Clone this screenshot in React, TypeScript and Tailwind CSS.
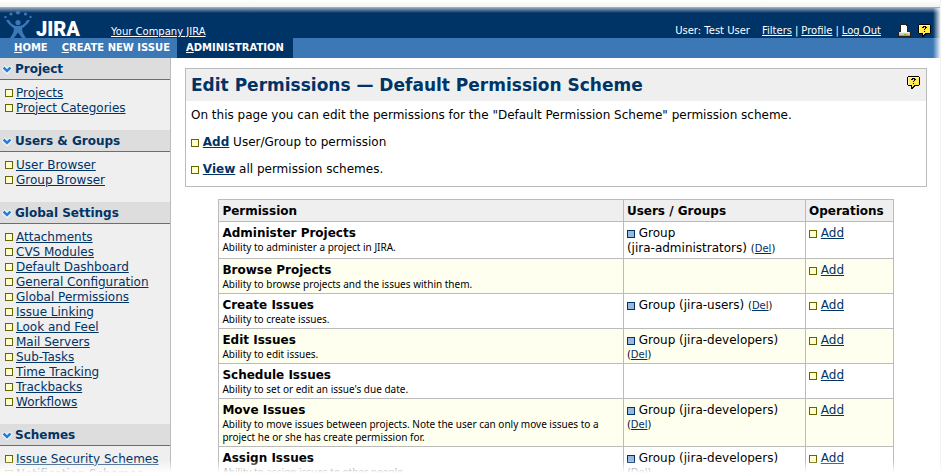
import React from "react";

type Section = { title: string; links: string[] };

const sections: Section[] = [
  { title: "Project", links: ["Projects", "Project Categories"] },
  { title: "Users & Groups", links: ["User Browser", "Group Browser"] },
  {
    title: "Global Settings",
    links: [
      "Attachments",
      "CVS Modules",
      "Default Dashboard",
      "General Configuration",
      "Global Permissions",
      "Issue Linking",
      "Look and Feel",
      "Mail Servers",
      "Sub-Tasks",
      "Time Tracking",
      "Trackbacks",
      "Workflows",
    ],
  },
  { title: "Schemes", links: ["Issue Security Schemes", "Notification Schemes"] },
];

type Permission = { name: string; about: string; group?: string };

const permissions: Permission[] = [
  { name: "Administer Projects", about: "Ability to administer a project in JIRA.", group: "jira-administrators" },
  { name: "Browse Projects", about: "Ability to browse projects and the issues within them." },
  { name: "Create Issues", about: "Ability to create issues.", group: "jira-users" },
  { name: "Edit Issues", about: "Ability to edit issues.", group: "jira-developers" },
  { name: "Schedule Issues", about: "Ability to set or edit an issue's due date." },
  {
    name: "Move Issues",
    about:
      "Ability to move issues between projects. Note the user can only move issues to a project he or she has create permission for.",
    group: "jira-developers",
  },
  { name: "Assign Issues", about: "Ability to assign issues to other people.", group: "jira-developers" },
];

function Bullet({ blue = false }: { blue?: boolean }) {
  return (
    <span
      className={
        "inline-block size-2 shrink-0 border align-[-1px] " +
        (blue ? "border-[#003366] bg-[#99b8dc]" : "border-[#666600] bg-[#ffffcc]")
      }
    />
  );
}

function Chevron() {
  return (
    <svg width="10" height="9" viewBox="0 0 10 9" className="shrink-0" aria-hidden="true">
      <path d="M1 2 L5 6 L9 2" fill="none" stroke="#ffffff" strokeWidth="4.5" />
      <path d="M1.5 2.5 L5 6 L8.5 2.5" fill="none" stroke="#2a7fd8" strokeWidth="2.6" />
    </svg>
  );
}

function HelpIcon() {
  return (
    <svg width="13" height="13" viewBox="0 0 13 13" shapeRendering="crispEdges" aria-hidden="true">
      <path d="M1 0H12V1H13V9H12V10H8V11H7V12H6V13H4V10H1V9H0V1H1Z" fill="#000000" />
      <path d="M1 1H12V9H7V10H6V11H5V9H1Z" fill="#ffe94d" />
      <path d="M1 1H12V2H2V9H1Z" fill="#fff9b0" />
      <path d="M5 2H8V3H5ZM4 3H6V4H4ZM7 3H9V4H7ZM7 4H8V5H7ZM6 5H7V6H6ZM6 7H7V8H6Z" fill="#000000" />
    </svg>
  );
}

function PrinterIcon() {
  return (
    <svg width="13" height="13" viewBox="0 0 13 13" shapeRendering="crispEdges" aria-hidden="true">
      <path d="M2 0H9V1H10V7H12V8H13V13H0V8H1V7H2Z" fill="#222222" />
      <path d="M3 1H8V2H9V8H3Z" fill="#ffffff" />
      <path d="M1 8H12V12H1Z" fill="#cccccc" />
      <path d="M2 8H11V9H2Z" fill="#f2f2f2" />
      <path d="M6 10H8V11H6Z" fill="#66bb33" />
      <path d="M8 10H10V11H8Z" fill="#e6bd20" />
      <path d="M1 11H12V12H1Z" fill="#999999" />
    </svg>
  );
}

function Mascot() {
  return (
    <svg width="30" height="29" viewBox="0 0 30 29" fill="#3c78b5" aria-hidden="true">
      <circle cx="15" cy="3.5" r="2.1" />
      <circle cx="8" cy="5" r="1.6" />
      <circle cx="22.5" cy="5" r="1.6" />
      <circle cx="2.5" cy="8" r="1.2" />
      <circle cx="27.5" cy="8" r="1.2" />
      <circle cx="15" cy="13.5" r="2.6" />
      <path d="M3 11 L6 11 C8 15 11 17 15 17 C19 17 22 15 24 11 L27 11 C25 15 22 17 19 19.5 C19 23 21 26 23 29 L19 29 L15 23.5 L11 29 L7 29 C9 26 11 23 11 19.5 C8 17 5 15 3 11Z" />
    </svg>
  );
}

function TopBar() {
  return (
    <header className="mr-1">
      <div className="h-[7px] bg-linear-to-b from-white to-[#f2f2f0]" />
      <div className="h-[6px] bg-linear-to-b from-[#a9b9ca] to-[#003366]" />
      <div className="flex h-[25px] items-end justify-between bg-[#003366] pr-[10px] text-[10px] leading-[13px] text-white">
        <div className="flex items-end">
          <a href="#home" aria-label="JIRA" className="flex w-20 items-end gap-[3px] pl-[3px]">
            <Mascot />
            <span className="font-[Roboto,sans-serif] text-[20px] leading-[17px] font-black">JIRA</span>
          </a>
          <a href="#company" className="ml-[31px] underline">
            Your Company JIRA
          </a>
        </div>
        <div className="flex items-center pb-px">
          <span className="mr-3">User: Test User</span>
          <a href="#filters" className="underline">Filters</a>
          <span className="px-[3px]">|</span>
          <a href="#profile" className="underline">Profile</a>
          <span className="px-[3px]">|</span>
          <a href="#logout" className="underline">Log Out</a>
          <button type="button" aria-label="Print" className="ml-[17px]">
            <PrinterIcon />
          </button>
          <button type="button" aria-label="Help" className="ml-[7px]">
            <HelpIcon />
          </button>
        </div>
      </div>
      <nav className="flex h-5 bg-[#3c78b5] pl-[7px] text-[10px] leading-5 font-bold text-white">
        <a href="#home" className="px-[7px]"><u>H</u>OME</a>
        <a href="#create" className="px-[7px]"><u>C</u>REATE NEW ISSUE</a>
        <a href="#admin" className="bg-[#003366] px-[9px]"><u>A</u>DMINISTRATION</a>
      </nav>
    </header>
  );
}

function Sidebar() {
  return (
    <aside className="w-[171px] shrink-0 border-r border-[#bbbbbb] bg-[#efefef]">
      {sections.map((s) => (
        <section key={s.title} className="pb-[15px]">
          <h3 className="mb-[5px] flex h-[22px] items-center gap-[3px] border-b border-[#3c78b5] bg-[#dddddd] pt-px pl-[2px] text-[12px] font-bold text-[#003366]">
            <Chevron />
            {s.title}
          </h3>
          <ul>
            {s.links.map((l) => (
              <li key={l} className="flex h-[15px] items-center gap-[3px] pt-px pl-[5px] whitespace-nowrap">
                <Bullet />
                <a href="#admin" className="text-[#003366] underline">{l}</a>
              </li>
            ))}
          </ul>
        </section>
      ))}
    </aside>
  );
}

function PermissionTable() {
  const cell = "border border-[#bbbbbb] pt-1 pb-[2px] pl-[3px] align-top";
  return (
    <table className="mx-auto mt-3 w-[91%] table-fixed border-collapse text-left">
      <thead>
        <tr className="bg-[#efefef]">
          <th className={cell + " w-[60%]"}>Permission</th>
          <th className={cell + " w-[27%]"}>Users / Groups</th>
          <th className={cell + " w-[13%]"}>Operations</th>
        </tr>
      </thead>
      <tbody>
        {permissions.map((p) => (
          <tr key={p.name} className="even:bg-[#fffff0]">
            <td className={cell}>
              <b className="block">{p.name}</b>
              <span className="block font-['Noto_Sans',sans-serif] text-[10px] leading-[13px]">{p.about}</span>
            </td>
            <td className={cell + " pr-2 text-[10px] leading-[13px]"}>
              {p.group && (
                <>
                  <span className="text-[12px] leading-[15px]">
                    <Bullet blue /> Group <span className="whitespace-nowrap">({p.group})</span>{" "}
                  </span>
                  (<a href="#delete" className="text-[#003366] underline">Del</a>)
                </>
              )}
            </td>
            <td className={cell}>
              <Bullet /> <a href="#add" className="text-[#003366] underline">Add</a>
            </td>
          </tr>
        ))}
      </tbody>
    </table>
  );
}

export default function App() {
  return (
    <div className="relative flex h-screen flex-col overflow-hidden bg-white font-['DejaVu_Sans',sans-serif] text-[12px] leading-[15px] text-black">
      <TopBar />
      <div className="flex min-h-0 flex-1">
        <Sidebar />
        <main className="mr-[18px] ml-[14px] min-w-0 flex-1 pt-[10px]">
          <section className="border border-[#bbbbbb]">
            <div className="flex h-8 justify-between bg-[#efefef] pr-[6px] pl-[5px]">
              <h1 className="text-[17px] leading-8 font-bold text-[#003366]">
                Edit Permissions — Default Permission Scheme
              </h1>
              <button type="button" aria-label="Help" className="mt-[7px] self-start">
                <HelpIcon />
              </button>
            </div>
            <div className="flex flex-col gap-3 px-[5px] pt-[7px] pb-[9px]">
              <p>On this page you can edit the permissions for the "Default Permission Scheme" permission scheme.</p>
              <p>
                <Bullet /> <a href="#add" className="font-bold text-[#003366] underline">Add</a> User/Group to permission
              </p>
              <p>
                <Bullet /> <a href="#view" className="font-bold text-[#003366] underline">View</a> all permission schemes.
              </p>
            </div>
          </section>
          <PermissionTable />
        </main>
      </div>
      <div className="pointer-events-none absolute top-2 right-1 h-[50px] w-2 bg-linear-to-r from-transparent to-white" />
      <div className="pointer-events-none absolute top-0 right-1 bottom-0 w-px bg-[#f2f2f2]" />
      <div className="pointer-events-none absolute right-0 bottom-0 left-0 h-4 bg-linear-to-b from-transparent to-white to-80%" />
    </div>
  );
}
